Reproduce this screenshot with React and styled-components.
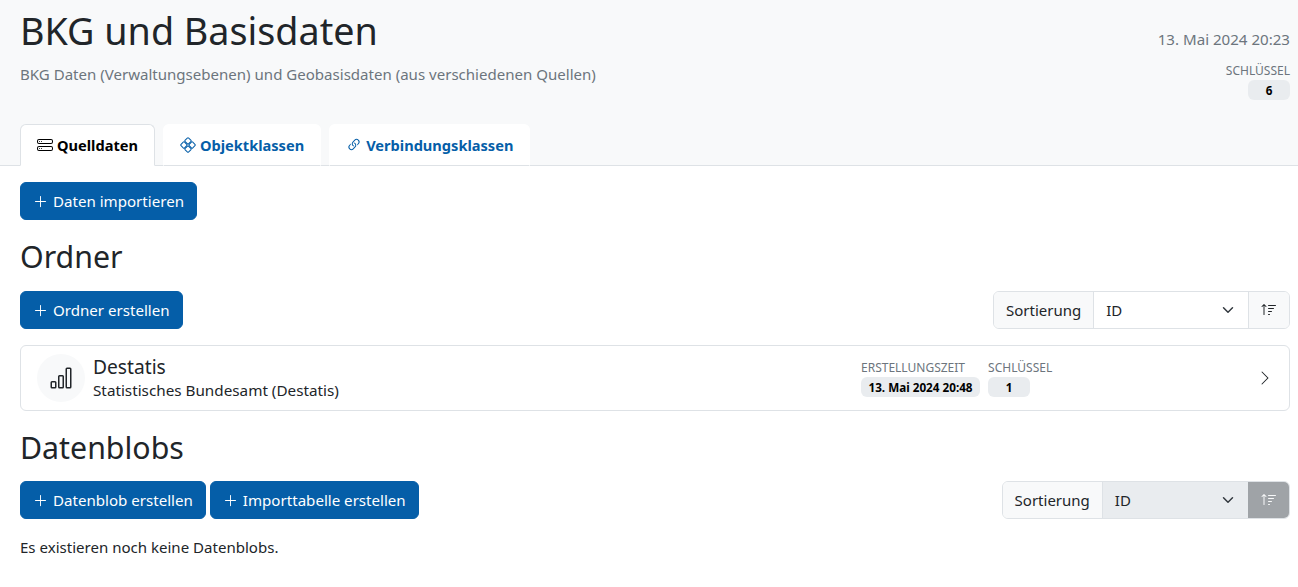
import React from 'react'
import styled, { createGlobalStyle } from 'styled-components'
import { BsHddStack, BsLink45Deg, BsPlusLg, BsBarChart, BsSortUp, BsChevronRight } from 'react-icons/bs'

const Global = createGlobalStyle`
  html, body { margin: 0; padding: 0; background: #fff; }
  body { font-family: "Noto Sans", "Open Sans", sans-serif; color: #212529; }
  * { box-sizing: border-box; }
`

const Page = styled.div`
  width: 1298px;
  height: 587px;
  overflow: hidden;
`

const Header = styled.header`
  height: 166px;
  background: #f8f9fa;
  border-bottom: 1px solid #dee2e6;
  padding: 0 8px 0 20px;
  display: flex;
  flex-direction: column;
  justify-content: space-between;
`

const HeaderTop = styled.div`
  display: flex;
  justify-content: space-between;
`

const Title = styled.h1`
  margin: 7px 0 0;
  font-size: 37.7px;
  line-height: 48px;
  font-weight: 400;
`

const Subtitle = styled.p`
  margin: 9px 0 0;
  font-size: 15.05px;
  line-height: 20px;
  color: #6c757d;
`

const HeaderMeta = styled.div`
  display: flex;
  flex-direction: column;
  align-items: flex-end;
  padding-top: 28px;
`

const Timestamp = styled.div`
  font-size: 15.1px;
  line-height: 22px;
  color: #6c757d;
  margin-bottom: 13px;
`

const Field = styled.div`
  display: flex;
  flex-direction: column;
  align-items: ${p => (p.$end ? 'flex-end' : 'flex-start')};
`

const FieldLabel = styled.span`
  font-size: 12px;
  line-height: 16px;
  color: #6c757d;
`

const Badge = styled.span`
  min-width: 42px;
  height: 20px;
  margin-top: 1px;
  padding: 0 7.5px;
  border-radius: 6px;
  background: #e9ecef;
  color: #000;
  font-size: 11.7px;
  font-weight: 700;
  line-height: 20px;
  text-align: center;
`

const Tabs = styled.nav`
  display: flex;
  gap: 8px;
  margin-bottom: -1px;
`

const Tab = styled.a`
  height: 42px;
  padding: 0 16px;
  display: flex;
  align-items: center;
  gap: 4px;
  font-size: 14.6px;
  font-weight: 700;
  border-radius: 6px 6px 0 0;
  background: #fff;
  color: ${p => (p.$active ? '#000' : '#055ea8')};
  border: 1px solid ${p => (p.$active ? '#dee2e6' : '#fff')};
  border-bottom: 1px solid ${p => (p.$active ? '#fff' : '#dee2e6')};
`

const Main = styled.main`
  padding: 16px 8px 0 20px;
`

const Button = styled.button`
  height: 38px;
  padding: 0 12px;
  display: inline-flex;
  align-items: center;
  gap: 5px;
  border: 1px solid #055ea8;
  border-radius: 6px;
  background: #055ea8;
  color: #fff;
  font-family: inherit;
  font-size: 15.1px;
`

const SectionTitle = styled.h2`
  margin: 16px 0 ${p => p.$gap}px;
  font-size: 30.3px;
  line-height: 41px;
  font-weight: 400;
`

const Toolbar = styled.div`
  display: flex;
  justify-content: space-between;
  align-items: center;
`

const ButtonRow = styled.div`
  display: flex;
  gap: 4px;
`

const SortGroup = styled.div`
  display: flex;
  height: 38px;
  width: ${p => p.$width}px;
  border: 1px solid #dee2e6;
  border-radius: 6px;
  overflow: hidden;
  font-size: 15px;
`

const SortLabel = styled.div`
  padding: 0 12px;
  display: flex;
  align-items: center;
  background: #f8f9fa;
  border-right: 1px solid #dee2e6;
`

const SortSelect = styled.div`
  flex: 1;
  padding: 0 14px 0 12px;
  display: flex;
  align-items: center;
  justify-content: space-between;
  background: ${p => (p.$disabled ? '#e9ecef' : '#fff')};
`

const SortButton = styled.div`
  width: 41px;
  display: flex;
  align-items: center;
  justify-content: center;
  font-size: 16px;
  background: ${p => (p.$disabled ? '#9fa3a7' : '#f8f9fa')};
  color: ${p => (p.$disabled ? '#f8f9fa' : '#212529')};
  border-left: ${p => (p.$disabled ? 'none' : '1px solid #dee2e6')};
`

const Card = styled.div`
  margin-top: 16px;
  height: 66px;
  padding: 0 16px;
  display: flex;
  align-items: center;
  border: 1px solid #dee2e6;
  border-radius: 6px;
`

const IconCircle = styled.div`
  width: 48px;
  height: 48px;
  border-radius: 50%;
  background: #f8f9fa;
  display: flex;
  align-items: center;
  justify-content: center;
  font-size: 24px;
  margin-right: 8px;
`

const CardText = styled.div`
  flex: 1;
  padding-bottom: 2px;
`

const CardTitle = styled.div`
  font-size: 19.2px;
  line-height: 25px;
`

const CardSub = styled.div`
  font-size: 15.25px;
  line-height: 22px;
`

const CardFields = styled.div`
  display: flex;
  gap: 8px;
  align-self: flex-start;
  padding-top: 14px;
  width: 396px;
`

const Chevron = styled.div`
  display: flex;
  font-size: 16px;
  color: #212529;
`

const Empty = styled.p`
  margin: 18px 0 0;
  font-size: 15.05px;
  line-height: 20px;
`

// same arrow bootstrap draws on form-select
const SelectArrow = () => (
  <svg width="12" height="12" viewBox="0 0 16 16" fill="none" stroke="#343a40" strokeWidth="2" strokeLinecap="round" strokeLinejoin="round">
    <path d="m2 5 6 6 6-6" />
  </svg>
)

const DiamondIcon = () => (
  <svg width="16" height="16" viewBox="0 0 16 16" fill="none" stroke="currentColor">
    {[[8, 3.9], [12.1, 8], [8, 12.1], [3.9, 8]].map(([x, y]) => (
      <rect key={`${x}-${y}`} x={x - 2.5} y={y - 2.5} width="5" height="5" rx="1" transform={`rotate(45 ${x} ${y})`} />
    ))}
  </svg>
)

export default function App() {
  return (
    <Page>
      <Global />
      <Header>
        <HeaderTop>
          <div>
            <Title>BKG und Basisdaten</Title>
            <Subtitle>BKG Daten (Verwaltungsebenen) und Geobasisdaten (aus verschiedenen Quellen)</Subtitle>
          </div>
          <HeaderMeta>
            <Timestamp>13. Mai 2024 20:23</Timestamp>
            <Field $end>
              <FieldLabel>SCHLÜSSEL</FieldLabel>
              <Badge>6</Badge>
            </Field>
          </HeaderMeta>
        </HeaderTop>
        <Tabs>
          <Tab $active><BsHddStack size={16} /> Quelldaten</Tab>
          <Tab><DiamondIcon /> Objektklassen</Tab>
          <Tab><BsLink45Deg size={16} /> Verbindungsklassen</Tab>
        </Tabs>
      </Header>
      <Main>
        <Button><BsPlusLg size={15} /> Daten importieren</Button>
        <SectionTitle $gap={14}>Ordner</SectionTitle>
        <Toolbar>
          <Button><BsPlusLg size={15} /> Ordner erstellen</Button>
          <SortGroup $width={297}>
            <SortLabel>Sortierung</SortLabel>
            <SortSelect>ID <SelectArrow /></SortSelect>
            <SortButton><BsSortUp /></SortButton>
          </SortGroup>
        </Toolbar>
        <Card>
          <IconCircle><BsBarChart /></IconCircle>
          <CardText>
            <CardTitle>Destatis</CardTitle>
            <CardSub>Statistisches Bundesamt (Destatis)</CardSub>
          </CardText>
          <CardFields>
            <Field>
              <FieldLabel>ERSTELLUNGSZEIT</FieldLabel>
              <Badge>13. Mai 2024 20:48</Badge>
            </Field>
            <Field>
              <FieldLabel>SCHLÜSSEL</FieldLabel>
              <Badge>1</Badge>
            </Field>
          </CardFields>
          <Chevron><BsChevronRight /></Chevron>
        </Card>
        <SectionTitle $gap={13}>Datenblobs</SectionTitle>
        <Toolbar>
          <ButtonRow>
            <Button><BsPlusLg size={15} /> Datenblob erstellen</Button>
            <Button><BsPlusLg size={15} /> Importtabelle erstellen</Button>
          </ButtonRow>
          <SortGroup $width={288.4}>
            <SortLabel>Sortierung</SortLabel>
            <SortSelect $disabled>ID <SelectArrow /></SortSelect>
            <SortButton $disabled><BsSortUp /></SortButton>
          </SortGroup>
        </Toolbar>
        <Empty>Es existieren noch keine Datenblobs.</Empty>
      </Main>
    </Page>
  )
}
